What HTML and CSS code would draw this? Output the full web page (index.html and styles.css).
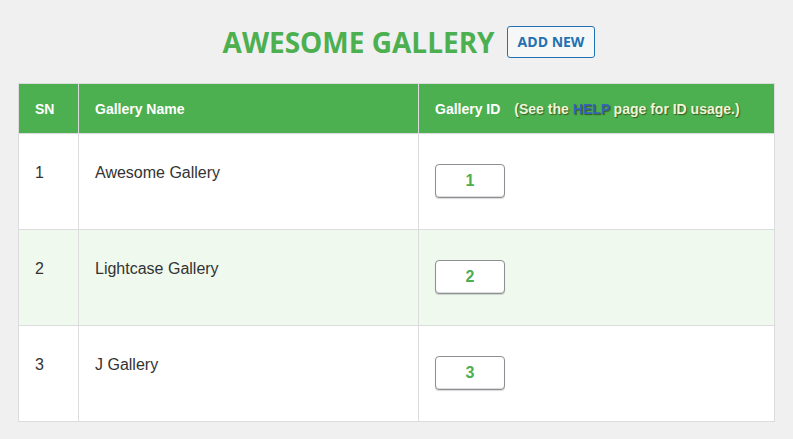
FILE: index.html
```html
<!DOCTYPE html>
<html>
<head>
<meta charset="utf-8">
<link rel="stylesheet" href="styles.css">
</head>
<body>
<div class="wrap">
  <div class="title-row">
    <h1 class="title">AWESOME GALLERY</h1>
    <a class="add-new">ADD NEW</a>
  </div>
  <table class="grid">
    <thead>
      <tr>
        <th class="c-sn">SN</th>
        <th class="c-name">Gallery Name</th>
        <th class="c-id">Gallery ID <span class="hint">(See the <span class="help">HELP</span> page for ID usage.)</span></th>
      </tr>
    </thead>
    <tbody>
      <tr>
        <td>1</td>
        <td>Awesome Gallery</td>
        <td class="id-cell"><span class="id-box">1</span></td>
      </tr>
      <tr class="alt">
        <td>2</td>
        <td>Lightcase Gallery</td>
        <td class="id-cell"><span class="id-box">2</span></td>
      </tr>
      <tr>
        <td>3</td>
        <td>J Gallery</td>
        <td class="id-cell"><span class="id-box">3</span></td>
      </tr>
    </tbody>
  </table>
</div>
</body>
</html>
```
FILE: styles.css
```css
html, body {
  margin: 0;
  padding: 0;
  background: #f0f0f1;
}
body {
  font-family: "Liberation Sans", Arial, sans-serif;
  color: #333;
}
.wrap {
  padding: 18px 18px 0 18px;
}
.title-row {
  display: flex;
  justify-content: center;
  align-items: center;
  gap: 12px;
  padding-left: 25px;
  height: 48px;
}
.title {
  margin: 0;
  font-family: "Open Sans", sans-serif;
  font-weight: 700;
  font-size: 28px;
  color: #4caf50;
}
.add-new {
  display: inline-block;
  box-sizing: border-box;
  height: 32px;
  line-height: 30px;
  padding: 0 10px;
  border: 1px solid #2271b1;
  border-radius: 3px;
  background: #f6f7f7;
  color: #2271b1;
  font-family: "Open Sans", sans-serif;
  font-weight: 700;
  font-size: 14px;
}
.grid {
  margin-top: 17px;
  width: 757px;
  border-collapse: collapse;
  background: #fff;
  border: 1px solid #dcdcde;
  table-layout: fixed;
}
.grid th {
  background: #4caf50;
  color: #fff;
  font-weight: 700;
  font-size: 14px;
  text-align: left;
  height: 49px;
  padding: 0 16px;
  border: 1px solid #dcdcde;
  border-top: 0;
}
.c-sn { width: 27px; }
.c-name { width: 307px; }
.hint {
  margin-left: 10px;
  color: #eef6d8;
  text-shadow: 1px 1px 1px #3a5a20;
}
.help {
  color: #3565b8;
}
.grid td {
  height: 96px;
  box-sizing: border-box;
  padding: 30px 16px 0 16px;
  vertical-align: top;
  font-size: 16px;
  color: #333;
  border: 1px solid #dcdcde;
}
.grid tr.alt td {
  background: #eff9ee;
}
.grid td.id-cell {
  padding-top: 30px;
}
.id-box {
  display: inline-block;
  box-sizing: border-box;
  width: 70px;
  height: 34px;
  line-height: 32px;
  text-align: center;
  border: 1px solid #8c8f94;
  border-radius: 4px;
  background: #fff;
  box-shadow: inset 0 -1px 1px rgba(0,0,0,0.15), 0 1px 1px rgba(0,0,0,0.15);
  color: #4caf50;
  font-weight: 700;
  font-size: 16px;
}
```
